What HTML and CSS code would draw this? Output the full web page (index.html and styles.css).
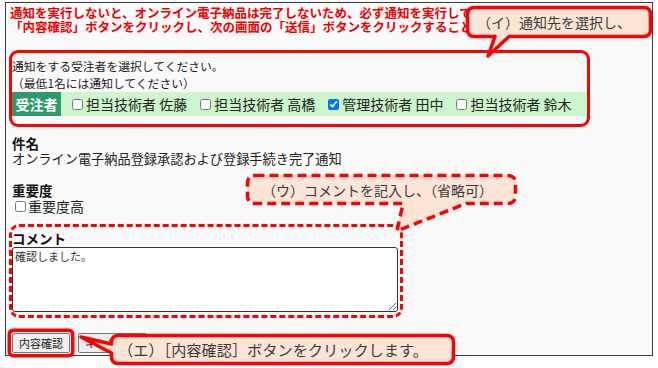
FILE: index.html
```html
<!DOCTYPE html>
<html lang="ja">
<head>
<meta charset="utf-8">
<title>通知</title>
<link rel="stylesheet" href="styles.css">
</head>
<body>
<div class="frame">
  <div class="notice">
    <p>通知を実行しないと、オンライン電子納品は完了しないため、必ず通知を実行してください。</p>
    <p>「内容確認」ボタンをクリックし、次の画面の「送信」ボタンをクリックすることで、オンライン電子納品が完了します。</p>
  </div>

  <div class="box-solid recipients">
    <p class="hint">通知をする受注者を選択してください。</p>
    <p class="hint">（最低1名には通知してください）</p>
    <div class="row">
      <span class="tag">受注者</span>
      <label class="chk"><input type="checkbox">担当技術者 佐藤</label>
      <label class="chk"><input type="checkbox">担当技術者 高橋</label>
      <label class="chk"><input type="checkbox" checked>管理技術者 田中</label>
      <label class="chk"><input type="checkbox">担当技術者 鈴木</label>
    </div>
  </div>

  <div class="field subject">
    <div class="label">件名</div>
    <div class="value">オンライン電子納品登録承認および登録手続き完了通知</div>
  </div>

  <div class="field importance">
    <div class="label">重要度</div>
    <label class="chk single"><input type="checkbox">重要度高</label>
  </div>

  <div class="box-dashed comment">
    <div class="label">コメント</div>
    <textarea class="memo">確認しました。</textarea>
  </div>

  <div class="actions">
    <button class="btn primary">内容確認</button>
    <button class="btn">キャンセル</button>
  </div>
</div>

<svg class="overlay" width="658" height="368" viewBox="0 0 658 368">
  <path class="bubble" d="M474.5,7.5 H643.5 Q650.5,7.5 650.5,14.5 V29.5 Q650.5,36.5 643.5,36.5 H509 L488,56 L495,36.5 H474.5 Q467.5,36.5 467.5,29.5 V14.5 Q467.5,7.5 474.5,7.5 Z"/>
  <path class="bubble dashed" d="M255.5,175.5 H507.5 Q515.5,175.5 515.5,183.5 V195.5 Q515.5,203.5 507.5,203.5 H466 L397,231 L403,203.5 H255.5 Q247.5,203.5 247.5,195.5 V183.5 Q247.5,175.5 255.5,175.5 Z"/>
  <path class="bubble" d="M118.5,335.5 H446.5 Q453.5,335.5 453.5,342.5 V356.5 Q453.5,363.5 446.5,363.5 H118.5 Q111.5,363.5 111.5,356.5 V353 L81,337 L111.5,344 V342.5 Q111.5,335.5 118.5,335.5 Z"/>
</svg>
<div class="callout c-i">（イ）通知先を選択し、</div>
<div class="callout c-u">（ウ）コメントを記入し、（省略可）</div>
<div class="callout c-e">（エ）［内容確認］ボタンをクリックします。</div>
</body>
</html>
```

FILE: styles.css
```css
html, body {
  margin: 0;
  padding: 0;
  background: #ffffff;
}
body {
  width: 658px;
  height: 368px;
  position: relative;
  overflow: hidden;
  font-family: "Noto Sans CJK JP", "Noto Sans", sans-serif;
  font-size: 13px;
  line-height: 16px;
  color: #222;
}
p { margin: 0; }

.frame {
  box-sizing: border-box;
  width: 648px;
  margin: 2px 0 0 5px;
  border: 1px solid #3c3c3c;
  background: #fafafa;
  padding: 0 6px 2px 6px;
}

.notice {
  padding-top: 3px;
  margin-left: -2px;
  color: #f00000;
  font-weight: bold;
  font-size: 12.5px;
  line-height: 14px;
}
.notice p {
  white-space: nowrap;
  overflow: hidden;
  height: 14px;
}

.box-solid {
  box-sizing: border-box;
  border: 3px solid #ff0000;
  border-radius: 9px;
  margin-left: -3px;
}
.box-dashed {
  box-sizing: border-box;
  border: 3px dashed #ff0000;
  border-radius: 10px;
  margin-left: -3px;
}

.recipients {
  width: 581px;
  margin-top: 16px;
  padding: 4px 0 8px 0;
}
.hint {
  font-size: 11.8px;
  line-height: 17px;
  height: 17px;
  color: #222;
}
.row {
  margin-top: 1px;
  height: 24px;
  display: flex;
  align-items: center;
  gap: 13px;
  background: #ccf7cc;
}
.tag {
  width: 49px;
  height: 24px;
  line-height: 24px;
  text-align: center;
  background: #2e9b6b;
  color: #fff;
  font-weight: bold;
  font-size: 14px;
  margin-right: -2px;
}
.chk {
  display: inline-flex;
  align-items: center;
  font-size: 14px;
  line-height: 17px;
  height: 17px;
  color: #222;
  white-space: nowrap;
}
.chk input {
  width: 11px;
  height: 11px;
  margin: 0 3px 0 0;
}
.chk.single {
  display: flex;
}
.chk.single input {
  margin: 0 2px 0 3px;
}

.label {
  font-weight: bold;
  font-size: 13.5px;
  line-height: 16px;
  height: 16px;
  color: #111;
}
.subject {
  margin-top: 8px;
}
.subject .value {
  font-size: 13.2px;
  line-height: 15px;
  height: 15px;
}
.importance {
  margin-top: 16px;
}

.comment {
  width: 394px;
  margin-top: 9px;
  padding: 3px 2px 3px 0;
}
.memo {
  display: block;
  box-sizing: border-box;
  width: 386px;
  height: 65px;
  margin: 1px 0 0 0;
  padding: 1px 2px;
  border: 1.5px solid #333;
  border-radius: 3px;
  background: #fff;
  font-family: "Noto Sans CJK JP", "Noto Sans", sans-serif;
  font-size: 11px;
  line-height: 14px;
  color: #333;
  resize: both;
}

.actions {
  margin-top: 15px;
  height: 20px;
  display: flex;
  gap: 8px;
}
.btn {
  box-sizing: border-box;
  height: 20px;
  padding: 0 6px;
  border: 1px solid #767676;
  border-radius: 2px;
  background: #efefef;
  font-family: "Noto Sans CJK JP", "Noto Sans", sans-serif;
  font-size: 11px;
  line-height: 18px;
  color: #222;
}
.btn.primary {
  box-shadow: 0 0 0 1px #fafafa, 0 0 0 4.5px #ff0000;
}

.overlay {
  position: absolute;
  left: 0;
  top: 0;
}
.bubble {
  fill: #fce4d6;
  stroke: #ff0000;
  stroke-width: 3.5;
  stroke-linejoin: round;
}
.bubble.dashed {
  stroke-dasharray: 9 5;
}

.callout {
  position: absolute;
  white-space: nowrap;
  color: #3a3a3a;
  font-size: 14px;
  line-height: 18px;
}
.c-i {
  left: 477px;
  top: 13px;
}
.c-u {
  left: 262px;
  top: 181px;
}
.c-e {
  left: 118px;
  top: 340px;
  font-size: 15.2px;
}
```
